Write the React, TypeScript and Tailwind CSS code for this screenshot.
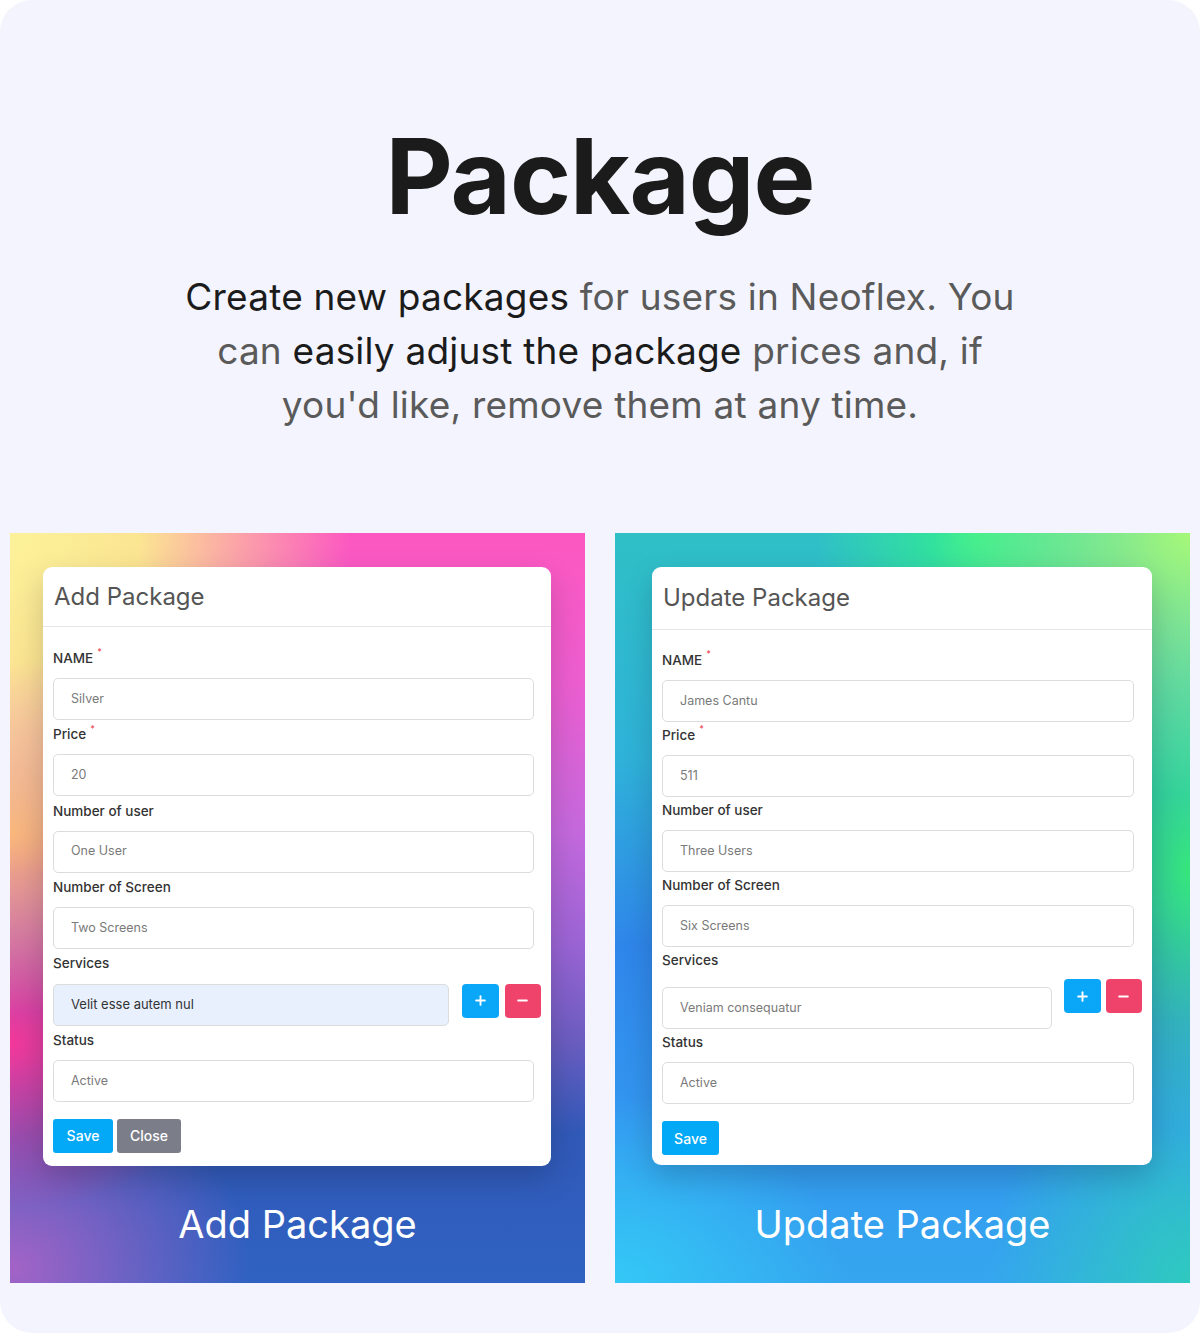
import { Plus, Minus } from 'lucide-react'

type Field = {
  label: string
  value: string
  required?: boolean
}

const font = "font-['Inter','Noto_Sans',sans-serif]"

function Label({ text, required }: { text: string; required?: boolean }) {
  return (
    <div className="h-5 flex items-center text-[13.5px] font-medium text-[#333]">
      {text}
      {required && <span className="ml-[4px] -mt-3 text-[9px] text-[#f04a5a]">*</span>}
    </div>
  )
}

function Input({ value, width, filled }: { value: string; width: string; filled?: boolean }) {
  return (
    <div
      className={`${width} h-[42px] shrink-0 rounded-[5px] border border-[#dcdcdc] flex items-center pl-[17px] ${
        filled ? 'bg-[#e8f0fe] text-[#333] text-[13px]' : 'bg-white text-[#7a7a7a] text-[12.5px]'
      }`}
    >
      {value}
    </div>
  )
}

function PackageForm({
  title,
  fields,
  service,
  status,
  add,
}: {
  title: string
  fields: Field[]
  service: string
  status: string
  add?: boolean
}) {
  const inputW = add ? 'w-[481px]' : 'w-[472px]'
  const gap = add ? 'mt-[4.4px]' : 'mt-[3px]'
  return (
    <div className={`${add ? 'w-[508px]' : 'w-[500px]'} bg-white rounded-[9px] shadow-[0_12px_30px_rgba(0,0,0,0.18)] overflow-hidden`}>
      <div className={`${add ? 'h-[60px]' : 'h-[63px]'} pl-[11px] text-[24px] flex items-center border-b border-[#e6e6e6] text-[#555]`}>
        {title}
      </div>
      <div className={`px-[10px] ${add ? 'pt-[21px] pb-[13px]' : 'pt-[20px] pb-[10px]'}`}>
        {fields.map((f, i) => (
          <div key={f.label} className={i > 0 ? gap : ''}>
            <Label text={f.label} required={f.required} />
            <div className="mt-[10px]">
              <Input value={f.value} width={inputW} />
            </div>
          </div>
        ))}
        <div className={gap}>
          <Label text="Services" />
          {add ? (
            <div className="mt-[10px] flex items-start">
              <Input value={service} width="w-[396px]" filled />
              <button className="ml-[13px] w-[38px] h-[34px] rounded-[4px] bg-[#0aa6f7] flex items-center justify-center text-white">
                <Plus size={15} strokeWidth={3} />
              </button>
              <button className="ml-[6px] w-[37px] h-[34px] rounded-[4px] bg-[#f0436b] flex items-center justify-center text-white">
                <Minus size={15} strokeWidth={3} />
              </button>
            </div>
          ) : (
            <div className="mt-[9px] flex items-start">
              <div className="mt-[8px]">
                <Input value={service} width="w-[390px]" />
              </div>
              <button className="ml-[12px] w-[37px] h-[34px] rounded-[4px] bg-[#0aa6f7] flex items-center justify-center text-white">
                <Plus size={15} strokeWidth={3} />
              </button>
              <button className="ml-[5px] w-[37px] h-[34px] rounded-[4px] bg-[#f0436b] flex items-center justify-center text-white">
                <Minus size={15} strokeWidth={3} />
              </button>
            </div>
          )}
        </div>
        <div className={gap}>
          <Label text="Status" />
          <div className="mt-[10px]">
            <Input value={status} width={inputW} />
          </div>
        </div>
        <div className="mt-[17px] flex gap-[4px]">
          <button className={`${add ? 'w-[60px]' : 'w-[57px]'} h-[34px] rounded-[3px] bg-[#03a9f7] text-white text-[14px] font-medium`}>
            Save
          </button>
          {add && (
            <button className="w-[64px] h-[34px] rounded-[3px] bg-[#7b7e89] text-white text-[14px] font-medium">
              Close
            </button>
          )}
        </div>
      </div>
    </div>
  )
}

export default function App() {
  return (
    <div className={`w-[1200px] h-[1333px] bg-white ${font}`}>
      <div className="h-full rounded-[32px] bg-[#f3f4fd] flex flex-col items-center">
        <h1 className="mt-[112px] text-[104px] leading-[128px] font-bold tracking-[-1px] text-[#1b1b1b]">Package</h1>
        <p className="mt-[30px] text-center text-[37px] leading-[54px] tracking-[0.2px] text-[#5a5a5a]">
          <span className="text-[#1b1b1b]">Create new packages</span> for users in Neoflex. You
          <br />
          can <span className="text-[#1b1b1b]">easily adjust the package</span> prices and, if
          <br />
          you'd like, remove them at any time.
        </p>

        <div className="mt-[101px] w-full px-[10px] grid grid-cols-2 gap-[30px]">
          <div className="h-[750px] pt-[34px] pl-[33px] flex flex-col bg-[radial-gradient(circle_340px_at_0%_0%,#fcf29a_0%,#fbe592_38%,transparent_100%),radial-gradient(ellipse_45%_24%_at_0%_40%,#f9ad76,transparent),radial-gradient(ellipse_40%_22%_at_0%_68%,#f3389a,transparent),radial-gradient(ellipse_42%_26%_at_0%_98%,#a463c6,transparent),linear-gradient(180deg,#fd58c0_0%,#ec5ed0_20%,#c469dd_40%,#9a64d4_55%,#6a5dc0_68%,#3159b8_80%,#2f62c2_100%)]">
            <PackageForm
              add
              title="Add Package"
              fields={[
                { label: 'NAME', value: 'Silver', required: true },
                { label: 'Price', value: '20', required: true },
                { label: 'Number of user', value: 'One User' },
                { label: 'Number of Screen', value: 'Two Screens' },
              ]}
              service="Velit esse autem nul"
              status="Active"
            />
            <div className="flex-1 flex items-center justify-center pr-[33px] text-white text-[38px]">Add Package</div>
          </div>

          <div className="h-[750px] pt-[34px] pl-[37px] flex flex-col bg-[radial-gradient(ellipse_45%_35%_at_100%_0%,#a6f878,transparent),radial-gradient(ellipse_28%_22%_at_63%_0%,#33ee8e,transparent),radial-gradient(ellipse_25%_35%_at_100%_45%,#36e67c,transparent),radial-gradient(ellipse_40%_25%_at_0%_100%,#34c8f6,transparent),radial-gradient(ellipse_35%_35%_at_100%_100%,#2ec9bf,transparent),linear-gradient(180deg,#2fc0c6_0%,#2fb2d9_30%,#2f86ea_55%,#3398f0_80%,#35a6ef_100%)]">
            <PackageForm
              title="Update Package"
              fields={[
                { label: 'NAME', value: 'James Cantu', required: true },
                { label: 'Price', value: '511', required: true },
                { label: 'Number of user', value: 'Three Users' },
                { label: 'Number of Screen', value: 'Six Screens' },
              ]}
              service="Veniam consequatur"
              status="Active"
            />
            <div className="flex-1 flex items-center justify-center pr-[37px] text-white text-[38px]">Update Package</div>
          </div>
        </div>
      </div>
    </div>
  )
}
